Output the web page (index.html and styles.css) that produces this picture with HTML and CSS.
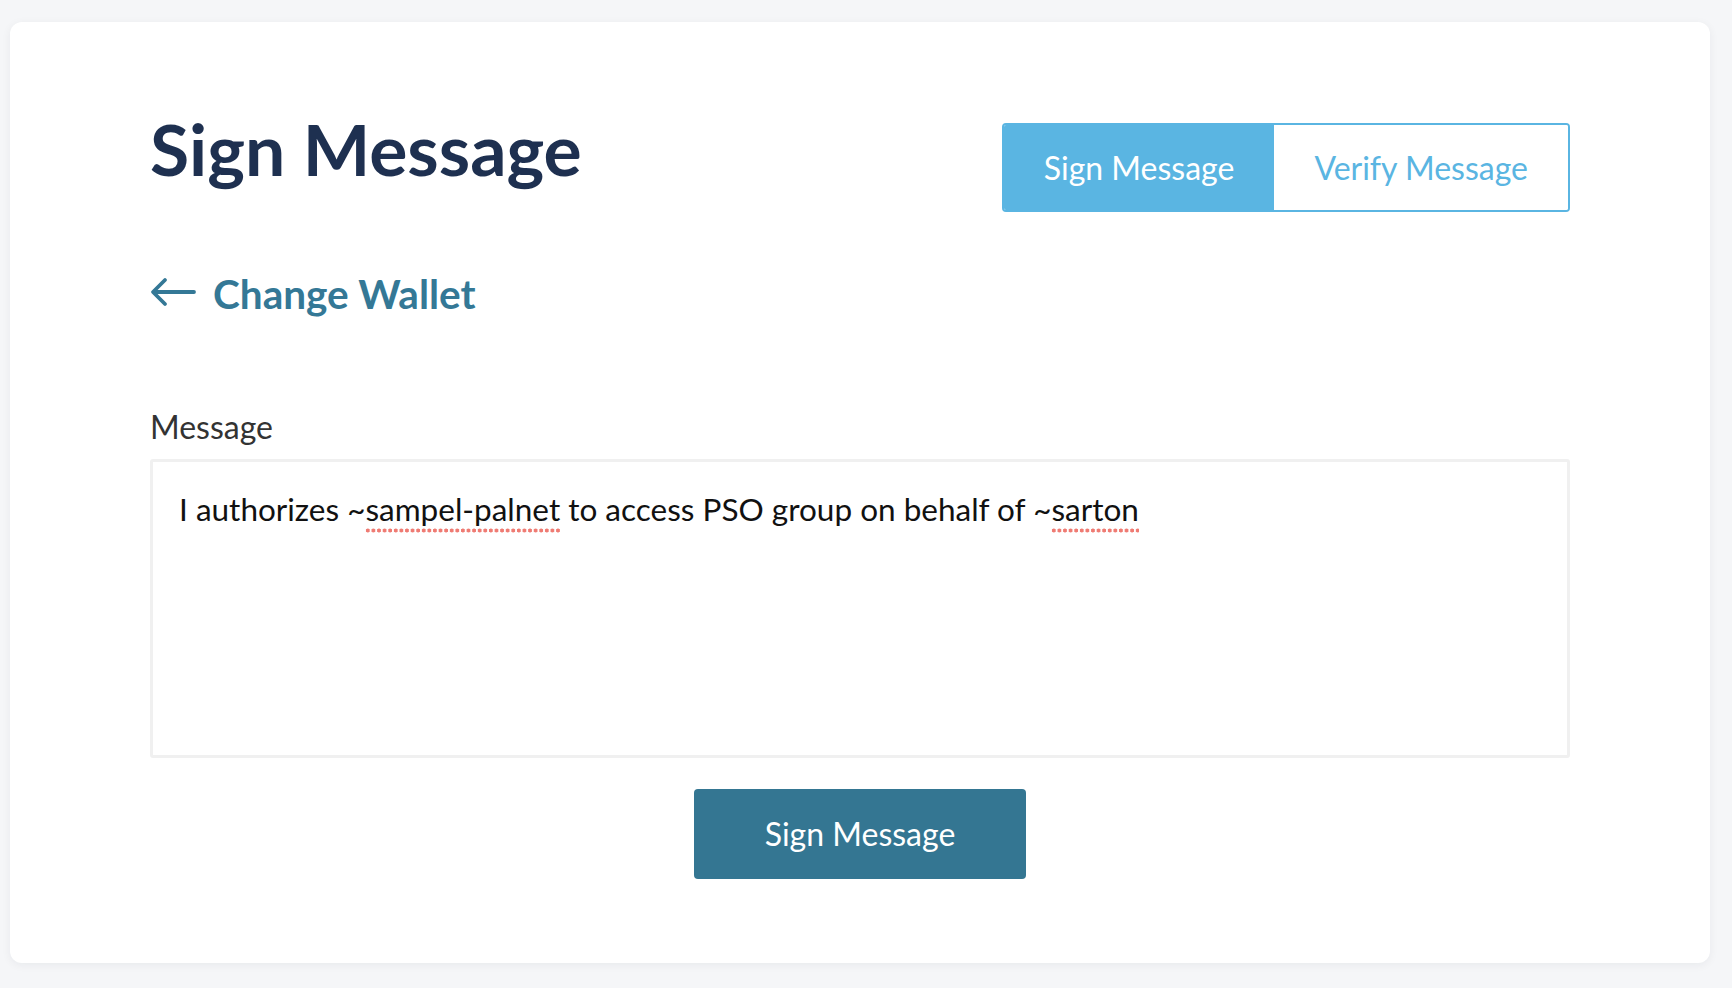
FILE: index.html
```html
<!DOCTYPE html>
<html lang="en">
<head>
    <meta charset="UTF-8">
    <meta name="viewport" content="width=device-width, initial-scale=1.0">
    <title>Sign Message</title>
    <link rel="stylesheet" href="styles.css">
</head>
<body>

<div class="page">
    <div class="card">
        <div class="header">
            <h1 class="title">Sign Message</h1>
            <div class="toggle">
                <button class="toggle-btn active">Sign Message</button>
                <button class="toggle-btn">Verify Message</button>
            </div>
        </div>

        <a class="back-link" href="#">
            <svg class="back-arrow" width="46" height="30" viewBox="0 0 46 30" fill="none">
                <path d="M44 15H4M15 3L3 15l12 12" stroke="currentColor" stroke-width="3.8" stroke-linecap="round" stroke-linejoin="round"/>
            </svg>
            Change Wallet
        </a>

        <label class="field-label" for="message">Message</label>
        <div class="message-box" id="message" role="textbox" contenteditable="true" spellcheck="false">I authorizes ~<span class="typo">sampel-palnet</span> to access PSO group on behalf of ~<span class="typo">sarton</span></div>

        <div class="actions">
            <button class="primary-btn">Sign Message</button>
        </div>
    </div>
</div>

</body>
</html>
```

FILE: styles.css
```css
  body {
      margin: 0;
      font-family: Lato, "Open Sans", sans-serif;
      background-color: #f5f6f8;
  }

  .page {
      padding: 22px 22px 25px 10px;
  }

  .card {
      background-color: #fff;
      border-radius: 12px;
      padding: 84px 140px 84px 140px;
      box-shadow: 0 2px 10px rgba(20, 30, 50, 0.06);
  }

  .header {
      display: flex;
      justify-content: space-between;
      align-items: flex-start;
  }

  .title {
      margin: 0;
      font-size: 71.5px;
      line-height: 1.2;
      font-weight: 700;
      color: #1e3050;
  }

  .toggle {
      display: flex;
      margin-top: 17px;
      border: 2px solid #5ab5e2;
      border-radius: 4px;
      overflow: hidden;
  }

  .toggle-btn {
      font-family: inherit;
      font-size: 32px;
      height: 85px;
      padding: 0 40px;
      border: none;
      background-color: #fff;
      color: #5ab5e2;
      cursor: pointer;
  }

  .toggle-btn.active {
      background-color: #5ab5e2;
      color: #fff;
  }

  .back-link {
      display: flex;
      align-items: center;
      gap: 17px;
      margin-top: 58px;
      font-size: 40.5px;
      line-height: 1.2;
      font-weight: 700;
      color: #347896;
      text-decoration: none;
  }

  .back-arrow {
      margin-top: -4px;
  }

  .field-label {
      display: block;
      margin-top: 89px;
      font-size: 32px;
      line-height: 1.2;
      color: #333;
  }

  .message-box {
      box-sizing: border-box;
      margin-top: 13px;
      height: 299px;
      padding: 29px 26px 25px;
      border: 3px solid #f0f0f0;
      border-radius: 3px;
      font-size: 31.5px;
      line-height: 1.2;
      color: #111;
      outline: none;
  }

  .typo {
      padding-bottom: 5px;
      background-image: radial-gradient(circle, #ef7b73 1.7px, transparent 2.3px);
      background-size: 5.6px 5px;
      background-repeat: repeat-x;
      background-position: 0 100%;
  }

  .actions {
      display: flex;
      justify-content: center;
      margin-top: 31px;
  }

  .primary-btn {
      font-family: inherit;
      font-size: 32px;
      width: 332px;
      height: 90px;
      border: none;
      border-radius: 4px;
      background-color: #347692;
      color: #fff;
      cursor: pointer;
  }
```
